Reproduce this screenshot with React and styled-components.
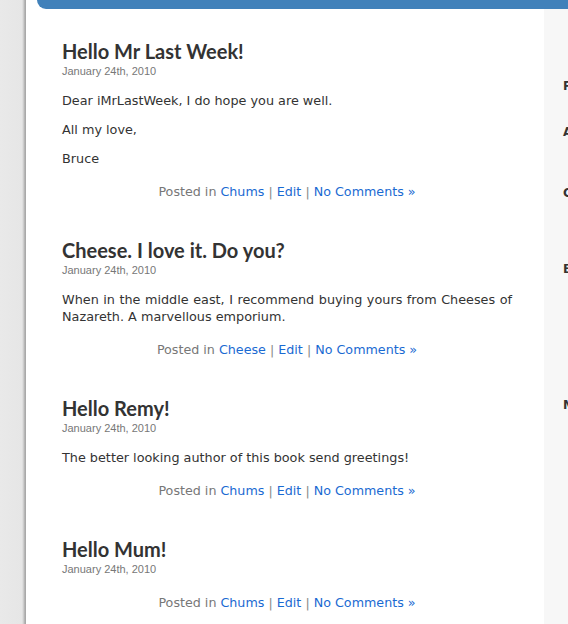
import styled, { createGlobalStyle } from "styled-components";

const GlobalStyle = createGlobalStyle`
  html, body {
    margin: 0;
    padding: 0;
    overflow: hidden;
    background: #e8e8e8;
  }
`;

const posts = [
  {
    title: "Hello Mr Last Week!",
    date: "January 24th, 2010",
    body: ["Dear iMrLastWeek, I do hope you are well.", "All my love,", "Bruce"],
    category: "Chums",
  },
  {
    title: "Cheese. I love it. Do you?",
    date: "January 24th, 2010",
    body: [
      "When in the middle east, I recommend buying yours from Cheeses of Nazareth. A marvellous emporium.",
    ],
    category: "Cheese",
  },
  {
    title: "Hello Remy!",
    date: "January 24th, 2010",
    body: ["The better looking author of this book send greetings!"],
    category: "Chums",
  },
  {
    title: "Hello Mum!",
    date: "January 24th, 2010",
    body: [],
    category: "Chums",
  },
];

const sidebar = [
  { heading: "Pages", items: ["About"] },
  { heading: "Archives", items: ["February 2010", "January 2010"] },
  { heading: "Categories", items: ["Cheese", "Chums", "Uncategorized"] },
  {
    heading: "Blogroll",
    items: [
      "Development Blog",
      "Documentation",
      "Plugins",
      "Suggest Ideas",
      "Support Forum",
      "Themes",
      "WordPress Planet",
    ],
  },
  { heading: "Meta", items: ["Log in", "Entries RSS", "Comments RSS"] },
];

const App = () => {
  return (
    <>
      <GlobalStyle />
      <Page>
        <Gutter />
        <Wrapper>
          <HeaderBar />
          <Columns>
            <Content>
              {posts.map((post) => (
                <Post key={post.title}>
                  <Title>{post.title}</Title>
                  <PostDate>{post.date}</PostDate>
                  <Entry>
                    {post.body.map((line) => (
                      <p key={line}>{line}</p>
                    ))}
                  </Entry>
                  <PostMeta $bare={post.body.length === 0}>
                    Posted in <a href="#">{post.category}</a> <Sep>|</Sep>{" "}
                    <a href="#">Edit</a> <Sep>|</Sep>{" "}
                    <a href="#">No Comments »</a>
                  </PostMeta>
                </Post>
              ))}
            </Content>
            <Sidebar>
              {sidebar.map((section) => (
                <Section key={section.heading}>
                  <SideHeading>{section.heading}</SideHeading>
                  <SideList>
                    {section.items.map((item) => (
                      <li key={item}>{item}</li>
                    ))}
                  </SideList>
                </Section>
              ))}
            </Sidebar>
          </Columns>
        </Wrapper>
      </Page>
    </>
  );
};

const Page = styled.div`
  display: flex;
  width: 800px;
  min-height: 624px;
`;

const Gutter = styled.div`
  width: 26px;
  flex-shrink: 0;
  background: linear-gradient(
    to right,
    #e9e9e9 0px,
    #e6e6e6 22px,
    #d6d6d6 23px,
    #c4c4c4 24px,
    #a9a9a9 25px
  );
`;

const Wrapper = styled.div`
  flex: 1;
  display: flex;
  flex-direction: column;
  background: #fff;
`;

const HeaderBar = styled.div`
  height: 9px;
  margin-left: 11px;
  background: #4181ba;
  border-bottom-left-radius: 9px;
`;

const Columns = styled.div`
  display: flex;
  flex: 1;
`;

const Content = styled.div`
  width: 450px;
  flex-shrink: 0;
  padding: 30px 32px 0 36px;
  background: #fff;
`;

const Post = styled.div`
  margin-bottom: 38px;
`;

const Title = styled.h2`
  margin: 0;
  font-family: "Lato", "DejaVu Sans", sans-serif;
  font-weight: 700;
  font-size: 20px;
  line-height: 24px;
  color: #333;
`;

const PostDate = styled.div`
  padding-top: 1px;
  font-family: "Liberation Sans", Arial, sans-serif;
  font-size: 11px;
  line-height: 14px;
  color: #777;
`;

const Entry = styled.div`
  margin-top: 14px;
  font-family: "DejaVu Sans", Verdana, sans-serif;
  font-size: 12.8px;
  line-height: 17px;
  color: #333;
  text-align: justify;

  p {
    margin: 0 0 12px;
  }
`;

const PostMeta = styled.div`
  margin-top: ${(p) => (p.$bare ? "18px" : "16px")};
  font-family: "DejaVu Sans", Verdana, sans-serif;
  font-size: 12.7px;
  line-height: 17px;
  color: #777;
  text-align: center;

  a {
    color: #1a6ad2;
    text-decoration: none;
  }
`;

const Sep = styled.span`
  color: #888;
`;

const Sidebar = styled.div`
  flex: 1;
  background: #f7f7f7;
  padding: 69px 0 0 19px;
`;

const Section = styled.div`
  margin-bottom: 15px;
`;

const SideHeading = styled.h3`
  margin: 0;
  font-family: "DejaVu Sans", Verdana, sans-serif;
  font-size: 12px;
  font-weight: 700;
  line-height: 16px;
  color: #333;
`;

const SideList = styled.ul`
  list-style: none;
  margin: 0;
  padding: 0 0 0 22px;

  li {
    font-family: "DejaVu Sans", Verdana, sans-serif;
    font-size: 11px;
    line-height: 15px;
    color: #1a6ad2;
    white-space: nowrap;
  }
`;

export default App;
